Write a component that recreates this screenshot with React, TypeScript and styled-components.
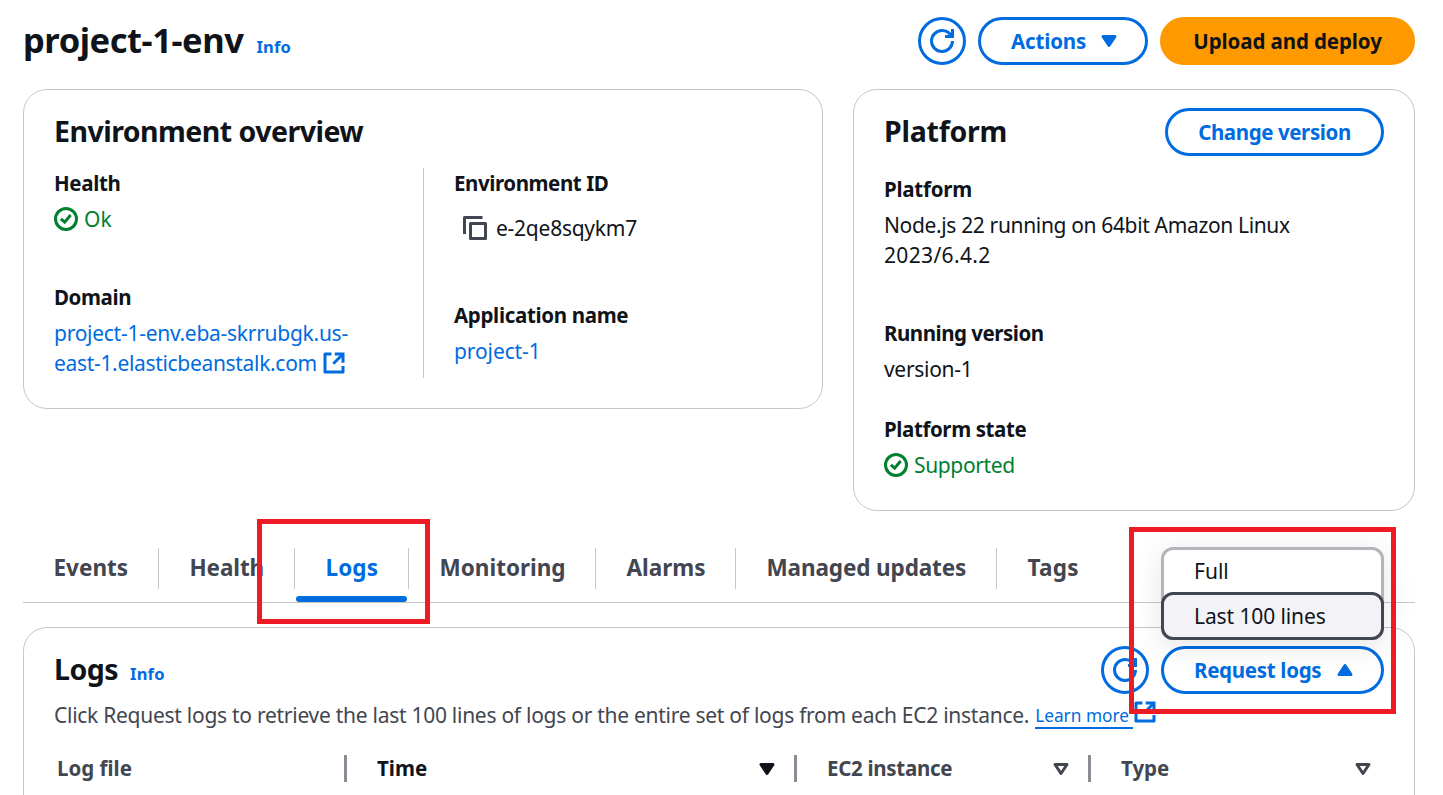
import React from 'react';
import styled, { createGlobalStyle, css } from 'styled-components';

const color = {
  text: '#0f141a',
  muted: '#424650',
  blue: '#006ce0',
  green: '#00802f',
  orange: '#ff9900',
  line: '#c6c6cd',
  separator: '#8c8c94',
  mark: '#ed1c24',
};

const GlobalStyle = createGlobalStyle`
  *, *::before, *::after { box-sizing: border-box; }
  body { margin: 0; background: #fff; overflow: hidden; }
`;

const Page = styled.main`
  position: relative;
  height: 795px;
  padding: 17px 28px 0 23px;
  overflow: hidden;
  font: 400 21px/30px "Noto Sans", "Open Sans", sans-serif;
  color: ${color.text};
  white-space: nowrap;
`;

const Line = styled.span<{ $t?: number }>`
  display: block;
  letter-spacing: ${p => p.$t ?? 0}px;
`;

const Header = styled.header`
  display: flex;
  align-items: center;
  justify-content: space-between;
  height: 48px;
`;

const TitleGroup = styled.div`
  display: flex;
  align-items: baseline;
  gap: 12px;
`;

const PageTitle = styled.h1`
  margin: 0;
  padding: 0 1px 3px 0;
  font-size: 34.5px;
  line-height: 48px;
  font-weight: 700;
  letter-spacing: -0.45px;
`;

const InfoLink = styled.a`
  font-size: 16.5px;
  font-weight: 700;
  letter-spacing: 0.2px;
  color: ${color.blue};
`;

const ButtonGroup = styled.div`
  display: flex;
  gap: 12px;
`;

const Button = styled.button<{ $width: number; $primary?: boolean; $menu?: boolean }>`
  display: flex;
  align-items: center;
  justify-content: ${p => (p.$menu ? 'space-between' : 'center')};
  width: ${p => p.$width}px;
  height: 48px;
  padding: ${p => (p.$menu ? '0 24px 0 30px' : '0')};
  border: 3px solid ${color.blue};
  border-radius: 24px;
  background: #fff;
  color: ${color.blue};
  font: inherit;
  font-size: 20.5px;
  font-weight: 700;
  ${p => p.$primary && css`
    border-color: ${color.orange};
    background: ${color.orange};
    color: ${color.text};
  `}
`;

const Svg = styled.svg`
  display: block;
  flex: none;
  width: 24px;
  height: 24px;
  fill: none;
  stroke: currentColor;
  stroke-width: 2;
`;

const Cards = styled.section`
  display: flex;
  align-items: flex-start;
  gap: 30px;
  margin-top: 24px;
`;

const Card = styled.section<{ $width?: number; $height: number }>`
  width: ${p => (p.$width ? `${p.$width}px` : 'auto')};
  height: ${p => p.$height}px;
  padding: 18px 30px 0;
  border: 1px solid ${color.line};
  border-radius: 24px;
`;

const CardHeader = styled.div`
  display: flex;
  align-items: center;
  justify-content: space-between;
  height: 48px;
`;

const CardTitle = styled.h2<{ $t?: number }>`
  margin: 0;
  padding-bottom: 2px;
  font-size: 28.5px;
  line-height: 36px;
  font-weight: 700;
  letter-spacing: ${p => p.$t ?? 0}px;
`;

const OverviewGrid = styled.div`
  display: grid;
  grid-template-columns: 370px 1fr;
  height: 210px;
  margin-top: 12px;
`;

const OverviewColumn = styled.div<{ $divided?: boolean }>`
  ${p => p.$divided ? css`border-right: 1px solid ${color.line};` : css`padding-left: 30px;`}
`;

const Field = styled.dl<{ $after?: number; $gap?: number }>`
  margin: 0 0 ${p => p.$after ?? 0}px;
  dt { font-size: 20.5px; font-weight: 700; }
  dd { margin: ${p => p.$gap ?? 6}px 0 0; }
`;

const PlatformFields = styled.div`
  margin-top: 18px;
`;

const Status = styled.span`
  display: flex;
  align-items: center;
  gap: 6px;
  color: ${color.green};
`;

const CopyValue = styled.span`
  display: flex;
  align-items: center;
  gap: 9px;
  padding-left: 9px;
  svg { color: ${color.muted}; }
`;

const Link = styled.a`
  color: ${color.blue};
`;

const LinkLine = styled.span`
  display: flex;
  align-items: center;
  gap: 5px;
`;

const Tabs = styled.nav`
  display: flex;
  height: 55px;
  margin-top: 37px;
  border-bottom: 1px solid ${color.line};
`;

const Tab = styled.a<{ $width: number; $active?: boolean; $last?: boolean }>`
  position: relative;
  width: ${p => p.$width}px;
  height: 41px;
  padding: 5px 0 0 30.5px;
  border-right: ${p => (p.$last ? 'none' : `1px solid ${color.line}`)};
  font-size: 22.5px;
  font-weight: 700;
  color: ${p => (p.$active ? color.blue : color.muted)};
  ${p => p.$active && css`
    &::after {
      content: '';
      position: absolute;
      left: 1px;
      right: 1px;
      top: 48px;
      height: 6px;
      border-radius: 3px;
      background: ${color.blue};
    }
  `}
`;

const LogsCard = styled(Card)`
  margin-top: 24px;
`;

const MenuAnchor = styled.div`
  position: relative;
`;

const Menu = styled.ul`
  position: absolute;
  left: 0;
  bottom: 54px;
  width: 223px;
  height: 93px;
  margin: 0;
  padding: 0;
  list-style: none;
  border: 3px solid #b4b4bb;
  border-radius: 12px;
  background: #fff;
  box-shadow: 0 6px 30px 1px rgba(0, 7, 22, 0.1);
`;

const MenuItem = styled.li<{ $highlighted?: boolean }>`
  height: 42px;
  padding: 6px 0 0 30px;
  ${p => p.$highlighted && css`
    height: 48px;
    margin: 0 -3px;
    border: 3px solid ${color.muted};
    border-radius: 12px;
    background: #f3f3f7;
  `}
`;

const Description = styled.p`
  display: flex;
  height: 30px;
  margin: 6px 0 0;
  color: ${color.muted};
`;

const LearnMore = styled.a`
  height: 29px;
  margin-left: 6px;
  padding-right: 4px;
  border-bottom: 2px solid ${color.blue};
  font-size: 17.3px;
  line-height: 32px;
  color: ${color.blue};
`;

const ExternalSlot = styled.span`
  color: ${color.blue};
`;

const TableHead = styled.div`
  display: grid;
  grid-template-columns: 293px 450px 294px 1fr;
  margin-top: 25px;
  height: 27px;
`;

const HeadCell = styled.div<{ $first?: boolean; $sorted?: boolean; $last?: boolean }>`
  display: flex;
  align-items: center;
  justify-content: space-between;
  padding-left: ${p => (p.$first ? 3 : 30)}px;
  padding-right: ${p => (p.$last ? 9 : 15)}px;
  border-right: ${p => (p.$last ? 'none' : `3px solid ${color.separator}`)};
  font-size: 20.5px;
  line-height: 27px;
  font-weight: 700;
  color: ${p => (p.$sorted ? color.text : color.muted)};
`;

const Mark = styled.div<{ $x: number; $y: number; $w: number; $h: number }>`
  position: absolute;
  left: ${p => p.$x}px;
  top: ${p => p.$y}px;
  width: ${p => p.$w}px;
  height: ${p => p.$h}px;
  border: 5px solid ${color.mark};
  pointer-events: none;
`;

const RefreshIcon = () => (
  <Svg viewBox="0 0 16 16">
    <path d="M10 5h5V0" />
    <path d="M15 8c0 3.87-3.13 7-7 7s-7-3.13-7-7 3.13-7 7-7c2.79 0 5.2 1.63 6.33 4" />
  </Svg>
);

const CheckIcon = () => (
  <Svg viewBox="0 0 16 16">
    <circle cx="8" cy="8" r="7" />
    <path d="m4.6 7.9 2.5 2.2 4-4.8" />
  </Svg>
);

const CopyIcon = () => (
  <Svg viewBox="0 0 16 16" strokeLinejoin="round">
    <path d="M5 5h10v10H5z" />
    <path d="M13 1H1v11" />
  </Svg>
);

const ExternalIcon = () => (
  <Svg viewBox="0 0 16 16">
    <path d="M6.3 2H2v12h12v-4" strokeLinejoin="round" />
    <path d="M8.5 2H14v5.8" />
    <path d="M7.5 8.5 14 2" />
  </Svg>
);

const CaretIcon = ({ up, hollow }: { up?: boolean; hollow?: boolean }) => (
  <Svg viewBox="0 0 16 16" strokeLinejoin="round">
    <path d={up ? 'M4 11h8L8 5z' : 'M4 5h8l-4 6z'} fill={hollow ? 'none' : 'currentColor'} />
  </Svg>
);

const tabs = [
  { label: 'Events', width: 136, track: 0 },
  { label: 'Health', width: 136, track: -0.1 },
  { label: 'Logs', width: 114, track: 0.1, active: true },
  { label: 'Monitoring', width: 187, track: 0 },
  { label: 'Alarms', width: 140, track: 0 },
  { label: 'Managed updates', width: 261, track: -0.12 },
  { label: 'Tags', width: 150, track: 0.3, last: true },
];

export default function App() {
  return (
    <Page>
      <GlobalStyle />
      <Header>
        <TitleGroup>
          <PageTitle>project-1-env</PageTitle>
          <InfoLink>Info</InfoLink>
        </TitleGroup>
        <ButtonGroup>
          <Button $width={48} aria-label="Refresh"><RefreshIcon /></Button>
          <Button $width={170} $menu><Line $t={-0.15}>Actions</Line><CaretIcon /></Button>
          <Button $width={255} $primary><Line $t={-0.1}>Upload and deploy</Line></Button>
        </ButtonGroup>
      </Header>

      <Cards>
        <Card $width={800} $height={320}>
          <CardHeader><CardTitle $t={-0.53}>Environment overview</CardTitle></CardHeader>
          <OverviewGrid>
            <OverviewColumn $divided>
              <Field $after={48}>
                <dt><Line $t={-0.35}>Health</Line></dt>
                <dd><Status><CheckIcon /><Line>Ok</Line></Status></dd>
              </Field>
              <Field>
                <dt><Line $t={-0.4}>Domain</Line></dt>
                <dd>
                  <Link>
                    <Line $t={-0.27}>project-1-env.eba-skrrubgk.us-</Line>
                    <LinkLine><Line $t={-0.32}>east-1.elasticbeanstalk.com</Line><ExternalIcon /></LinkLine>
                  </Link>
                </dd>
              </Field>
            </OverviewColumn>
            <OverviewColumn>
              <Field $after={57} $gap={15}>
                <dt><Line $t={-0.43}>Environment ID</Line></dt>
                <dd><CopyValue><CopyIcon /><Line $t={-0.25}>e-2qe8sqykm7</Line></CopyValue></dd>
              </Field>
              <Field>
                <dt><Line $t={-0.33}>Application name</Line></dt>
                <dd><Link><Line $t={-0.1}>project-1</Line></Link></dd>
              </Field>
            </OverviewColumn>
          </OverviewGrid>
        </Card>

        <Card $width={562} $height={422}>
          <CardHeader>
            <CardTitle $t={-0.25}>Platform</CardTitle>
            <Button $width={219}><Line $t={-0.4}>Change version</Line></Button>
          </CardHeader>
          <PlatformFields>
            <Field $after={48}>
              <dt><Line $t={-0.25}>Platform</Line></dt>
              <dd>
                <Line $t={-0.35}>Node.js 22 running on 64bit Amazon Linux</Line>
                <Line $t={0.35}>2023/6.4.2</Line>
              </dd>
            </Field>
            <Field $after={30}>
              <dt><Line $t={-0.48}>Running version</Line></dt>
              <dd><Line $t={-0.3}>version-1</Line></dd>
            </Field>
            <Field>
              <dt><Line $t={-0.4}>Platform state</Line></dt>
              <dd><Status><CheckIcon /><Line $t={-0.35}>Supported</Line></Status></dd>
            </Field>
          </PlatformFields>
        </Card>
      </Cards>

      <Tabs>
        {tabs.map(tab => (
          <Tab key={tab.label} $width={tab.width} $active={tab.active} $last={tab.last}>
            <Line $t={tab.track}>{tab.label}</Line>
          </Tab>
        ))}
      </Tabs>

      <LogsCard $height={300}>
        <CardHeader>
          <TitleGroup>
            <CardTitle $t={-0.5}>Logs</CardTitle>
            <InfoLink>Info</InfoLink>
          </TitleGroup>
          <ButtonGroup>
            <Button $width={48} aria-label="Refresh"><RefreshIcon /></Button>
            <MenuAnchor>
              <Button $width={223} $menu><Line $t={-0.3}>Request logs</Line><CaretIcon up /></Button>
              <Menu>
                <MenuItem><Line>Full</Line></MenuItem>
                <MenuItem $highlighted><Line $t={-0.1}>Last 100 lines</Line></MenuItem>
              </Menu>
            </MenuAnchor>
          </ButtonGroup>
        </CardHeader>
        <Description>
          <Line $t={-0.27}>
            Click Request logs to retrieve the last 100 lines of logs or the entire set of logs from each EC2 instance.
          </Line>
          <LearnMore>Learn more</LearnMore>
          <ExternalSlot><ExternalIcon /></ExternalSlot>
        </Description>
        <TableHead>
          <HeadCell $first><Line>Log file</Line></HeadCell>
          <HeadCell $sorted><Line>Time</Line><CaretIcon /></HeadCell>
          <HeadCell><Line $t={-0.3}>EC2 instance</Line><CaretIcon hollow /></HeadCell>
          <HeadCell $last><Line>Type</Line><CaretIcon hollow /></HeadCell>
        </TableHead>
      </LogsCard>

      <Mark $x={257} $y={519} $w={173} $h={105} />
      <Mark $x={1129} $y={527} $w={267} $h={187} />
    </Page>
  );
}
